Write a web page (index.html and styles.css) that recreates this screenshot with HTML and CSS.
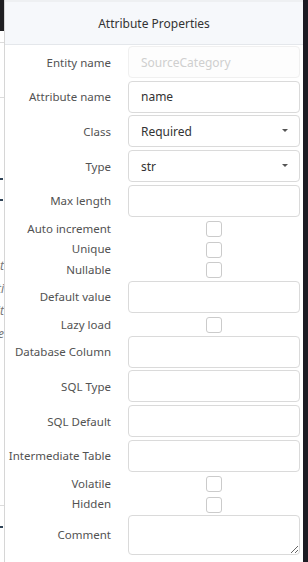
FILE: index.html
```html
<!DOCTYPE html>
<html lang="en">
<head>
<meta charset="utf-8">
<title>Attribute Properties</title>
<link rel="stylesheet" href="styles.css">
</head>
<body>
<div class="backdrop">
  <div class="bd-bar"></div>
  <div class="bd-line bd-l1"></div>
  <div class="bd-line bd-l2"></div>
  <div class="bd-mark bd-m1"></div>
  <div class="bd-mark bd-m2"></div>
  <div class="bd-text">
    <div>Attribut</div>
    <div>Relati</div>
    <div>Entit</div>
    <div>Mode</div>
  </div>
  <div class="bd-line bd-l3"></div>
  <div class="bd-mark bd-m3"></div>
</div>
<div class="panel">
  <div class="header">Attribute Properties</div>
  <form class="form">
    <div class="row"><label class="label">Entity name</label><div class="field"><input class="input" type="text" placeholder="SourceCategory" disabled></div></div>
    <div class="row"><label class="label">Attribute name</label><div class="field"><input class="input" type="text" value="name"></div></div>
    <div class="row"><label class="label">Class</label><div class="field select"><select class="input"><option>Required</option></select></div></div>
    <div class="row"><label class="label">Type</label><div class="field select"><select class="input"><option>str</option></select></div></div>
    <div class="row"><label class="label">Max length</label><div class="field"><input class="input" type="text"></div></div>
    <div class="row check"><label class="label">Auto increment</label><div class="field"><input class="box" type="checkbox"></div></div>
    <div class="row check"><label class="label">Unique</label><div class="field"><input class="box" type="checkbox"></div></div>
    <div class="row check"><label class="label">Nullable</label><div class="field"><input class="box" type="checkbox"></div></div>
    <div class="row"><label class="label">Default value</label><div class="field"><input class="input" type="text"></div></div>
    <div class="row check"><label class="label">Lazy load</label><div class="field"><input class="box" type="checkbox"></div></div>
    <div class="row"><label class="label">Database Column</label><div class="field"><input class="input" type="text"></div></div>
    <div class="row"><label class="label">SQL Type</label><div class="field"><input class="input" type="text"></div></div>
    <div class="row"><label class="label">SQL Default</label><div class="field"><input class="input" type="text"></div></div>
    <div class="row"><label class="label">Intermediate Table</label><div class="field"><input class="input" type="text"></div></div>
    <div class="row check"><label class="label">Volatile</label><div class="field"><input class="box" type="checkbox"></div></div>
    <div class="row check"><label class="label">Hidden</label><div class="field"><input class="box" type="checkbox"></div></div>
    <div class="row tall"><label class="label">Comment</label><div class="field"><textarea class="input area"></textarea></div></div>
  </form>
</div>
<div class="edge"></div>
</body>
</html>
```
FILE: styles.css
```css
html, body {
  margin: 0;
  padding: 0;
}
body {
  width: 308px;
  height: 562px;
  overflow: hidden;
  display: flex;
  background: #ffffff;
  font-family: "Noto Sans", "Open Sans", sans-serif;
}

/* background page peeking out on the left */
.backdrop {
  width: 4px;
  flex: none;
  display: flex;
  flex-direction: column;
  overflow: hidden;
  background: #ffffff;
}
.bd-bar {
  height: 31px;
  background: #1f1f22;
  flex: none;
}
.bd-line {
  height: 1px;
  background: #dcdcdc;
  flex: none;
}
.bd-l1 { margin-top: 11px; }
.bd-l2 { margin-top: 54px; }
.bd-l3 { margin-top: 160px; }
.bd-mark {
  height: 2px;
  width: 3px;
  background: #2f4356;
  flex: none;
}
.bd-m1 { margin-top: 80px; }
.bd-m2 { margin-top: 19px; }
.bd-m3 { margin-top: 20px; }
.bd-text {
  margin-top: 54px;
  width: 4px;
  font-size: 12px;
  font-style: italic;
  color: #777;
  line-height: 22.5px;
  direction: rtl;
  white-space: nowrap;
  overflow: hidden;
  flex: none;
}

/* side panel */
.panel {
  flex: 1;
  display: flex;
  flex-direction: column;
  border-left: 1px solid #d6d6d6;
  background: #ffffff;
  min-width: 0;
}
.header {
  height: 42px;
  border-top: 2px solid #eef0f2;
  border-bottom: 1px solid #e4e7eb;
  background: #f6f8fb;
  display: flex;
  align-items: center;
  justify-content: center;
  font-size: 12px;
  color: #333333;
  flex: none;
}
.form {
  display: flex;
  flex-direction: column;
  padding: 0 3px 0 0;
}
.row {
  display: grid;
  grid-template-columns: 106px 172px;
  column-gap: 17px;
  align-items: center;
  height: 34.6px;
}
.row.check {
  height: 20.5px;
}
.row.tall {
  height: 42px;
}
.label {
  text-align: right;
  font-size: 11.5px;
  color: #525252;
  white-space: nowrap;
}
.field {
  display: flex;
  align-items: center;
  justify-content: center;
  position: relative;
}
.input {
  width: 100%;
  height: 32px;
  box-sizing: border-box;
  border: 1px solid #dadada;
  border-radius: 4px;
  padding: 0 12px;
  background: #ffffff;
  font-family: "Noto Sans", "Open Sans", sans-serif;
  font-size: 12px;
  color: #333333;
  outline: none;
  margin: 0;
}
.input:disabled {
  background: #fdfdfd;
  border-color: #f0f0f0;
}
.input::placeholder {
  color: #cfcfcf;
}
select.input {
  appearance: none;
  -webkit-appearance: none;
}
.select::after {
  content: "";
  position: absolute;
  right: 12px;
  top: 14px;
  border-left: 3px solid transparent;
  border-right: 3px solid transparent;
  border-top: 3.5px solid #555555;
  pointer-events: none;
}
.area {
  height: 40px;
  padding-top: 6px;
  resize: vertical;
  display: block;
}
.box {
  appearance: none;
  -webkit-appearance: none;
  width: 16px;
  height: 16px;
  box-sizing: border-box;
  border: 1px solid #cbcbcb;
  border-radius: 3px;
  margin: 2px 0 0 0;
  background: #ffffff;
}

.edge {
  width: 5px;
  flex: none;
  background: #1c1b23;
}
```
